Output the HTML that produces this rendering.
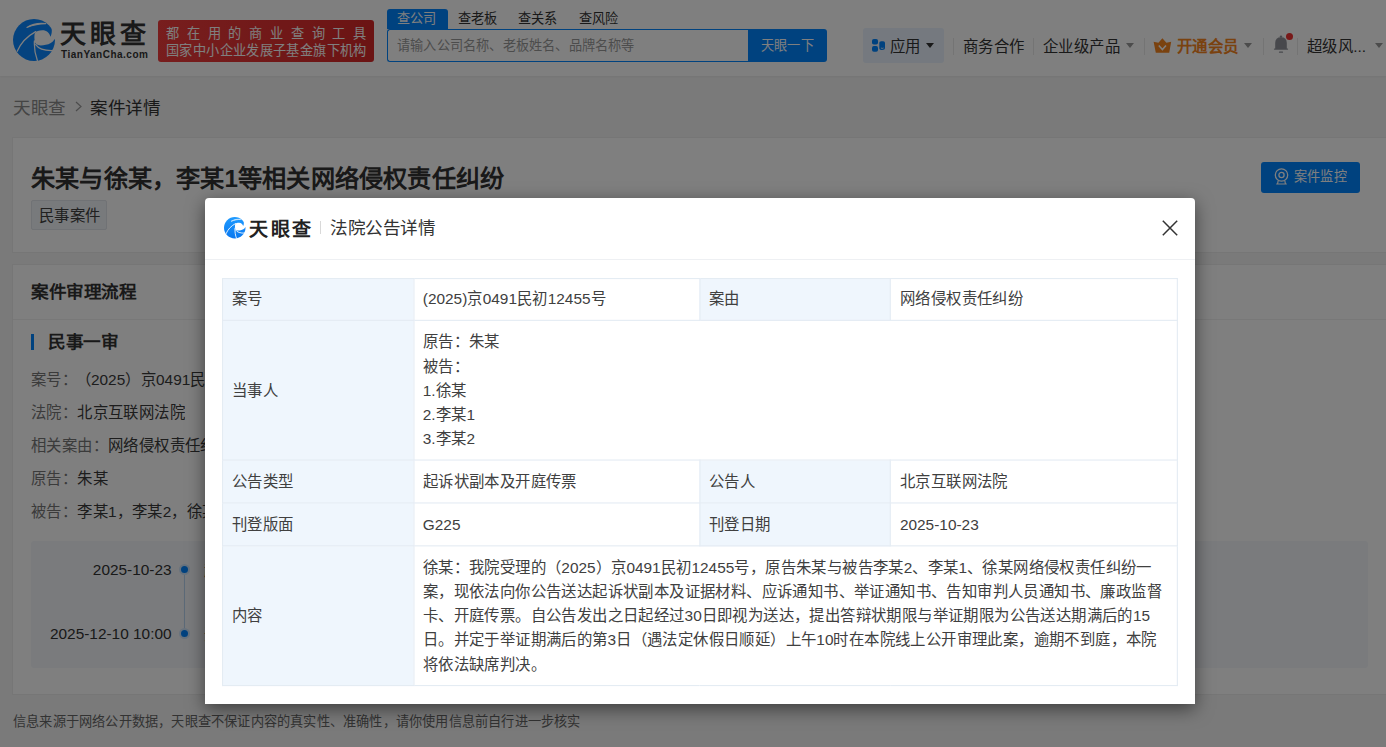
<!DOCTYPE html>
<html lang="zh-CN">
<head>
<meta charset="utf-8">
<style>
*{box-sizing:border-box;margin:0;padding:0}
html,body{width:1386px;height:747px;overflow:hidden}
body{position:relative;background:#f4f4f4;font-family:"Liberation Sans",sans-serif;color:#333;font-size:14px}
.a{position:absolute;white-space:nowrap;line-height:1}
.t{transform-origin:0 0;transform:scale(1.1)}
/* header */
#hd{position:absolute;left:0;top:0;width:1386px;height:76px;background:#fff;box-shadow:0 1px 2px rgba(0,0,0,.05)}
.banner{position:absolute;left:158px;top:20px;width:216px;height:42px;border-radius:3px;background:linear-gradient(90deg,#f03c3c,#d62828)}
.tab{position:absolute;top:9px;height:20px}
.on{left:387px;width:61px;background:#0084ff;border-radius:3px 3px 0 0}
.inp{position:absolute;left:387px;top:29px;width:362px;height:33px;border:1.5px solid #0084ff;border-right:0;border-radius:3px 0 0 3px;background:#fff}
.btn{position:absolute;left:748px;top:29px;width:79px;height:33px;background:#0084ff;border-radius:0 3px 3px 0}
.sep{position:absolute;top:38px;width:1px;height:17px;background:#e8e8e8}
.tri{position:absolute;width:0;height:0;border-left:4px solid transparent;border-right:4px solid transparent;border-top:5px solid #999}
/* cards */
.card{position:absolute;left:12px;width:1500px;background:#fff;border:1px solid #ececec}
/* overlay */
#mask{position:absolute;left:0;top:0;width:1386px;height:747px;background:rgba(0,0,0,.5)}
#modal{position:absolute;left:205px;top:198px;width:990px;height:506px;background:#fff;border-radius:4px 4px 0 0;box-shadow:0 5px 18px rgba(0,0,0,.5)}
.tw{position:absolute;left:17px;top:80px;width:868.6px;transform-origin:0 0;transform:scale(1.1)}
table{width:100%;border-collapse:collapse;table-layout:fixed;font-size:14px;color:#404040}
td{border:1px solid #e4ecf3;padding:8px 9px 8px 8px;line-height:22px;vertical-align:middle}
td.k{background:#eff6fd}
tr.r1 td{padding-top:7.3px}
tr.r5 td{padding-bottom:7.8px}
</style>
</head>
<body>
<div id="hd">
  <!-- logo -->
  <svg class="a" style="left:13px;top:19px" width="42" height="42" viewBox="0 0 100 100">
    <circle cx="50" cy="50" r="50" fill="#0a86ff"/>
    <path d="M52,34 C55,29 62,27 70,27 C80,27 87,33 89,42 C92,37 93,30 92,22 L110,22 L110,48 L99,48 C94,56 87,60 78,61.5 C68,63.5 58,64 53,58 C51,51 50,41 52,34 Z" fill="#fff"/>
    <path d="M33,20 C46,12 62,9 78,11 C66,11 48,14 33,20 Z" fill="#fff" stroke="#fff" stroke-width="2.5" stroke-linejoin="round"/>
    <g fill="none" stroke="#fff" stroke-width="3" stroke-linecap="round">
    <path d="M10,77 C18,58 32,42 54,30"/>
    <path d="M51,52 C50,70 53,86 58,99"/>
    <path d="M54,61 C61,71 76,76 97,75"/>
    </g>
  </svg>
  <div class="a" style="left:60px;top:21px;font-size:26px;font-weight:bold;color:#333;letter-spacing:4px">天眼查</div>
  <div class="a" style="left:61px;top:50px;font-size:10px;font-weight:bold;color:#333;letter-spacing:0.5px">TianYanCha.com</div>
  <div class="banner">
    <div class="a t" style="left:8px;top:6.5px;font-size:12px;color:#fff;letter-spacing:6.92px">都在用的商业查询工具</div>
    <div class="a t" style="left:8px;top:23.5px;font-size:12px;color:#fff;letter-spacing:0.16px">国家中小企业发展子基金旗下机构</div>
  </div>
  <div class="tab on"></div>
  <div class="a t" style="left:397px;top:12px;font-size:12px;color:#fff">查公司</div>
  <div class="a t" style="left:458px;top:12px;font-size:12px">查老板</div>
  <div class="a t" style="left:518px;top:12px;font-size:12px">查关系</div>
  <div class="a t" style="left:579px;top:12px;font-size:12px">查风险</div>
  <div class="inp"></div>
  <div class="a t" style="left:397px;top:39px;font-size:12px;color:#999">请输入公司名称、老板姓名、品牌名称等</div>
  <div class="btn"></div>
  <div class="a t" style="left:761px;top:39px;font-size:12px;color:#fff">天眼一下</div>

  <div class="a" style="left:863px;top:28px;width:81px;height:35px;background:#eaf3ff;border-radius:3px"></div>
  <svg class="a" style="left:871px;top:38px" width="15" height="15" viewBox="0 0 15 15"><rect x="1" y="1" width="6" height="5.6" rx="1.8" fill="#0084ff"/><rect x="1" y="8.1" width="6" height="5.7" rx="1.8" fill="#0084ff"/><path d="M8.3,4.8 Q8.3,3.2 10.2,3.2 L12.2,3.2 Q14,3.2 14,4.8 L14,10.2 Q14,12 11.2,12 Q8.3,12 8.3,10.2 Z" fill="#0084ff"/><path d="M9.9,10 Q11.2,10.9 12.5,10" stroke="#fff" stroke-width=".8" fill="none"/></svg>
  <div class="a t" style="left:890px;top:39px">应用</div>
  <div class="tri" style="left:926px;top:43px;border-top-color:#333"></div>
  <div class="sep" style="left:953px"></div>
  <div class="a t" style="left:963px;top:39px">商务合作</div>
  <div class="sep" style="left:1033px"></div>
  <div class="a t" style="left:1043px;top:39px">企业级产品</div>
  <div class="tri" style="left:1126px;top:43px"></div>
  <div class="sep" style="left:1144px"></div>
  <svg class="a" style="left:1153px;top:38px" width="19" height="15" viewBox="0 0 19 15"><path d="M0.6,3.8 L5.4,4.8 L9.4,0.2 L13.4,4.8 L18.2,3.8 L16.2,14.8 L2.8,14.8 Z" fill="#f5841f"/><path d="M5.8,7.4 L9.4,11.6 L13,7.4" stroke="#fff" stroke-width="1.5" fill="none"/></svg>
  <div class="a t" style="left:1177px;top:39px;color:#f5841f;font-weight:bold">开通会员</div>
  <div class="tri" style="left:1244px;top:43px"></div>
  <div class="sep" style="left:1263px"></div>
  <svg class="a" style="left:1273px;top:35px" width="16" height="19" viewBox="0 0 16 19"><circle cx="8" cy="1.6" r="1.2" fill="#8e9199"/><path d="M2.2,14 L2.2,8 Q2.2,2.2 8,2.2 Q13.8,2.2 13.8,8 L13.8,14 Z" fill="#8e9199"/><rect x="0.8" y="13.4" width="14.4" height="1.4" rx=".7" fill="#8e9199"/><rect x="5.9" y="16.6" width="4.2" height="1.2" rx=".6" fill="#8e9199"/></svg>
  <div class="a" style="left:1286px;top:33px;width:7px;height:7px;border-radius:50%;background:#f03232"></div>
  <div class="sep" style="left:1297px"></div>
  <div class="a t" style="left:1307px;top:39px">超级风...</div>
  <div class="tri" style="left:1375px;top:43px"></div>
</div>

<div class="a t" style="left:13px;top:100px;font-size:16px;color:#8a8a8a">天眼查</div>
<svg class="a" style="left:75px;top:101px" width="7" height="11" viewBox="0 0 7 11"><path d="M1,1 L6,5.5 L1,10" fill="none" stroke="#999" stroke-width="1.2"/></svg>
<div class="a t" style="left:90px;top:100px;font-size:16px;color:#333">案件详情</div>

<div class="card" style="top:137px;height:116px">
  <div class="a t" style="left:18px;top:29px;font-size:22px;font-weight:bold;color:#333">朱某与徐某，李某1等相关网络侵权责任纠纷</div>
  <div class="a" style="left:18px;top:62px;width:76px;height:30px;background:#f1f4f8;border:1px solid #e0e4ea;border-radius:2px"></div>
  <div class="a t" style="left:26px;top:70px;color:#404040">民事案件</div>
  <div class="a" style="left:1248px;top:24px;width:99px;height:31px;background:#0084ff;border-radius:3px"></div>
  <svg class="a" style="left:1261px;top:30px" width="16" height="17" viewBox="0 0 16 17"><circle cx="7.5" cy="7" r="6.2" fill="none" stroke="#fff" stroke-width="1.3"/><circle cx="7.5" cy="7" r="2.6" fill="none" stroke="#fff" stroke-width="1.3"/><path d="M4.2,12.6 L3.6,15.6 M10.8,12.6 L11.4,15.6 M2.2,16 L12.8,16" stroke="#fff" stroke-width="1.2" fill="none"/></svg>
  <div class="a t" style="left:1281px;top:31.5px;font-size:12px;color:#fff">案件监控</div>
</div>

<div class="card" style="top:264px;height:431px">
  <div class="a t" style="left:18px;top:19px;font-size:16px;font-weight:bold;color:#333">案件审理流程</div>
  <div class="a" style="left:0;top:54px;width:1500px;height:1px;background:#f0f0f0"></div>
  <div class="a" style="left:18px;top:69px;width:3px;height:16px;background:#0084ff"></div>
  <div class="a t" style="left:35px;top:68.5px;font-size:16px;font-weight:bold;color:#333">民事一审</div>
  <div class="a t" style="left:18px;top:107px;color:#777">案号：<span style="color:#3a3a3a;margin-left:5.5px">（2025）京0491民初12455号</span></div>
  <div class="a t" style="left:18px;top:140px;color:#777">法院：<span style="color:#3a3a3a">北京互联网法院</span></div>
  <div class="a t" style="left:18px;top:173px;color:#777">相关案由：<span style="color:#3a3a3a">网络侵权责任纠纷</span></div>
  <div class="a t" style="left:18px;top:206px;color:#777">原告：<span style="color:#3a3a3a">朱某</span></div>
  <div class="a t" style="left:18px;top:239px;color:#777">被告：<span style="color:#3a3a3a">李某1，李某2，徐某</span></div>
  <div class="a" style="left:18px;top:275.5px;width:1337px;height:127px;background:#f5f7fa;border-radius:3px">
    <div class="a t" style="right:1196px;top:21.5px;transform-origin:100% 0;color:#333">2025-10-23</div>
    <div class="a t" style="right:1196px;top:85.5px;transform-origin:100% 0;color:#333">2025-12-10 10:00</div>
    <div class="a" style="left:153px;top:32px;width:1px;height:62px;background:#b9d5f0"></div>
    <div class="a" style="left:148px;top:23px;width:11px;height:11px;border-radius:50%;background:#0084ff;border:2px solid #cfe4fa"></div>
    <div class="a" style="left:148px;top:87px;width:11px;height:11px;border-radius:50%;background:#0084ff;border:2px solid #cfe4fa"></div>
    <div class="a t" style="left:173px;top:22px;color:#333">起诉状副本及开庭传票</div>
    <div class="a t" style="left:173px;top:86px;color:#333">开庭公告</div>
  </div>
</div>

<div class="a t" style="left:13px;top:715px;font-size:12px;color:#666">信息来源于网络公开数据，天眼查不保证内容的真实性、准确性，请你使用信息前自行进一步核实</div>

<div id="mask"></div>
<div id="modal">
  <svg class="a" style="left:19px;top:19px" width="21.5" height="21.5" viewBox="0 0 100 100">
    <defs><linearGradient id="lg" x1="0" y1="0" x2="0" y2="1"><stop offset="0" stop-color="#1f9bff"/><stop offset="1" stop-color="#0a78f0"/></linearGradient></defs>
    <circle cx="50" cy="50" r="50" fill="url(#lg)"/>
    <path d="M52,34 C55,29 62,27 70,27 C80,27 87,33 89,42 C92,37 93,30 92,22 L110,22 L110,48 L99,48 C94,56 87,60 78,61.5 C68,63.5 58,64 53,58 C51,51 50,41 52,34 Z" fill="#fff"/>
    <path d="M33,20 C46,12 62,9 78,11 C66,11 48,14 33,20 Z" fill="#fff" stroke="#fff" stroke-width="2.5" stroke-linejoin="round"/>
    <g fill="none" stroke="#fff" stroke-width="4" stroke-linecap="round">
    <path d="M10,77 C18,58 32,42 54,30"/>
    <path d="M51,52 C50,70 53,86 58,99"/>
    <path d="M54,61 C61,71 76,76 97,75"/>
    </g>
  </svg>
  <div class="a" style="left:44px;top:21.5px;font-size:19px;font-weight:bold;color:#222;letter-spacing:2.6px">天眼查</div>
  <div class="a" style="left:115px;top:23px;width:1px;height:13px;background:#d9d9d9"></div>
  <div class="a t" style="left:125px;top:22px;font-size:16px;color:#333">法院公告详情</div>
  <svg class="a" style="left:957px;top:21.5px" width="16" height="16" viewBox="0 0 16 16"><path d="M0.8,0.8 L15.2,15.2 M15.2,0.8 L0.8,15.2" stroke="#333" stroke-width="1.5"/></svg>
  <div class="a" style="left:0;top:61px;width:990px;height:1px;background:#eef0f3"></div>
  <div class="tw">
  <table>
    <colgroup><col style="width:20%"><col style="width:30%"><col style="width:20%"><col style="width:30%"></colgroup>
    <tr class="r1"><td class="k">案号</td><td>(2025)京0491民初12455号</td><td class="k">案由</td><td>网络侵权责任纠纷</td></tr>
    <tr><td class="k">当事人</td><td colspan="3">原告：朱某<br>被告：<br>1.徐某<br>2.李某1<br>3.李某2</td></tr>
    <tr><td class="k">公告类型</td><td>起诉状副本及开庭传票</td><td class="k">公告人</td><td>北京互联网法院</td></tr>
    <tr><td class="k">刊登版面</td><td>G225</td><td class="k">刊登日期</td><td>2025-10-23</td></tr>
    <tr class="r5"><td class="k">内容</td><td colspan="3">徐某：我院受理的（2025）京0491民初12455号，原告朱某与被告李某2、李某1、徐某网络侵权责任纠纷一<br>案，现依法向你公告送达起诉状副本及证据材料、应诉通知书、举证通知书、告知审判人员通知书、廉政监督<br>卡、开庭传票。自公告发出之日起经过30日即视为送达，提出答辩状期限与举证期限为公告送达期满后的15<br>日。并定于举证期满后的第3日（遇法定休假日顺延）上午10时在本院线上公开审理此案，逾期不到庭，本院<br>将依法缺席判决。</td></tr>
  </table>
  </div>
</div>
</body>
</html>
